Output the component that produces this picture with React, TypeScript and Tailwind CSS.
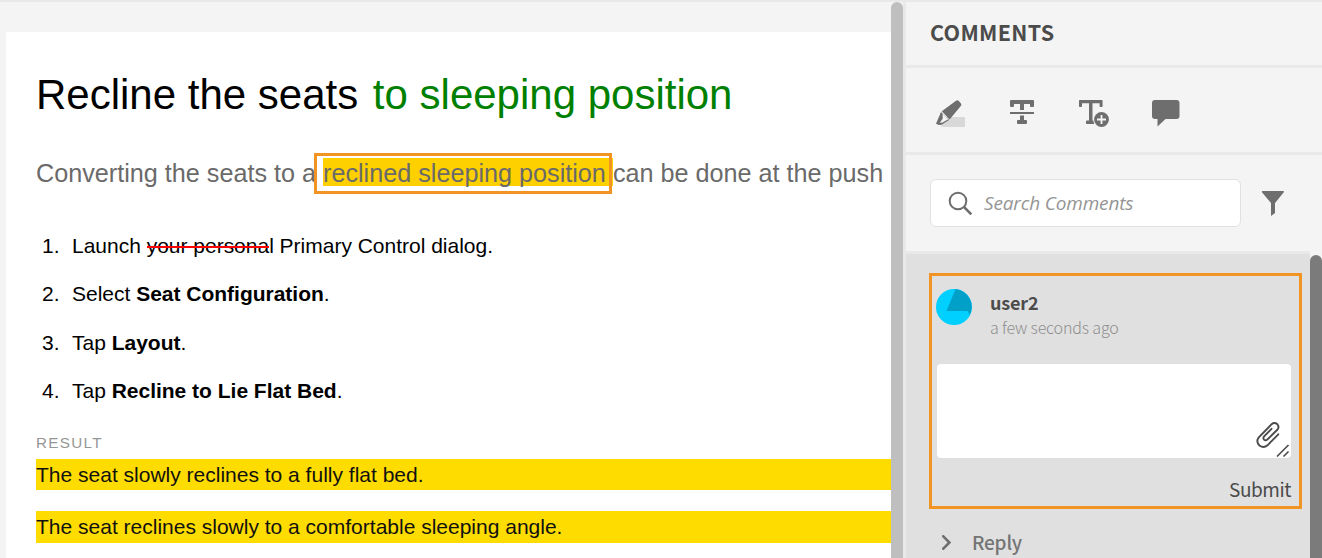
import type { ReactNode } from "react";

const uiFont = "font-['Noto_Sans_CJK_SC',sans-serif]";

function HighlightIcon() {
  return (
    <svg width="32" height="30" viewBox="0 0 32 30">
      <path d="M11 19h19v10H6z" fill="#d8d8d8" />
      <path d="M21 2.800q1.300-1.300 2.600 0l2.200 2.500q1 1.200.2 2.400L14.600 21.600 6.800 13.200z" fill="#6e6e6e" />
      <path d="M6 14L1 25.800q1.800 1.200 5.200 1.200L14 22" fill="#6e6e6e" />
      <path d="M7.600 15.600l5.600 5.700-5.600 3.200-2.900.3 3-4z" fill="#f4f4f4" />
    </svg>
  );
}

function StrikeIcon() {
  return (
    <svg width="24" height="24" viewBox="0 0 24 24" fill="#6e6e6e">
      <path d="M1 0h22q1 0 1 1v5q0 1-1 1h-2q-1 0-1-1V4h-6v6h-4V4H4v2q0 1-1 1H1q-1 0-1-1V1q0-1 1-1z" />
      <path d="M0 12h24v2H0zM10 15.500h4V20h2q1 0 1 1v2q0 1-1 1H8q-1 0-1-1v-2q0-1 1-1h2z" />
    </svg>
  );
}

function InsertIcon() {
  return (
    <svg width="31" height="27" viewBox="0 0 31 27">
      <path d="M.8 0h22q.8 0 .8.800v5.400q0 .8-.8.8h-1.400q-.8 0-.8-.8V3.300h-7.100V20.500h2.200V24H7.800q-.8 0-.8-.8v-1.900q0-.8.8-.8H10V3.300H3v2.900q0 .8-.8.8H.8Q0 7 0 6.200V.8Q0 0 .8 0z" fill="#6e6e6e" />
      <circle cx="22.500" cy="19.500" r="8.300" fill="#f4f4f4" />
      <circle cx="22.500" cy="19.500" r="7.400" fill="#6e6e6e" />
      <path d="M18 19.500h9M22.500 15v9" stroke="#f4f4f4" strokeWidth="1.800" />
    </svg>
  );
}

function BubbleIcon() {
  return (
    <svg width="28" height="27" viewBox="0 0 28 27" fill="#6e6e6e">
      <path d="M3 0h21.500q3 0 3 3v13q0 3-3 3H13.500l-8 7.500V19H3q-3 0-3-3V3q0-3 3-3z" />
    </svg>
  );
}

function PaperclipIcon() {
  return (
    <svg width="26" height="28" viewBox="0 0 26 28" fill="none" stroke="#4b4b4b" strokeWidth="1.900" strokeLinecap="round">
      <path d="M23.300 13.300l-10.800 11q-3.900 3.400-8 .2-4-4-.7-8.200L16.600 3.200q2.800-2.300 5.600-.1 2.600 2.900.1 5.700L12.400 18.500q-2 1.400-3.400.1-1.300-1.600.1-3.300l7.400-7.500" />
    </svg>
  );
}

function Step({ n, children }: { n: number; children: ReactNode }) {
  return (
    <li className="flex h-[48.400px] items-start text-[21px] leading-[24px] tracking-[-0.010px] text-[#000]">
      <span className="w-[30px] shrink-0">{n}.</span>
      <span className="whitespace-pre">{children}</span>
    </li>
  );
}

function Document() {
  return (
    <main className="h-full w-[891px] shrink-0 overflow-hidden bg-[#f4f4f4] pl-[6px] pt-[30px]">
      <article className="h-full bg-white pl-[30px] pt-[38px] font-['Liberation_Sans',Arial,sans-serif]">
        <h1 className="h-[50px] whitespace-pre text-[42px] leading-[50px] text-black">
          Recline the seats <span className="ml-[3px] text-[#008000]">to sleeping position</span>
        </h1>
        <p className="mt-[38px] h-[28px] whitespace-pre text-[25.200px] leading-[30px] text-[#6a6a6a]">
          Converting the seats to a{" "}
          <span className="relative inline-block h-[28px] bg-[#ffd000]">
            reclined sleeping position{" "}
            <span className="absolute -left-[9px] -top-[5px] h-[41px] w-[298px] border-3 border-[#f29423]" />
          </span>
          can be done at the push
        </p>
        <ol className="mt-[48px] pl-[6px]">
          <Step n={1}>
            Launch{" "}
            <span className="relative">
              your persona
              <span className="absolute left-0 top-[12px] h-[2px] w-full bg-[#ff0000]" />
            </span>
            l Primary Control dialog.
          </Step>
          <Step n={2}>Select <b>Seat Configuration</b>.</Step>
          <Step n={3}>Tap <b>Layout</b>.</Step>
          <Step n={4}>Tap <b>Recline to Lie Flat Bed</b>.</Step>
        </ol>
        <h2 className="mt-[5px] h-[20px] text-[15.200px] leading-[20px] tracking-[1.350px] text-[#969696]">RESULT</h2>
        <p className="mt-[6.500px] h-[31px] bg-[#ffdc00] text-[21px] leading-[32px] text-[#111]">
          The seat slowly reclines to a fully flat bed.
        </p>
        <p className="mt-[21px] h-[32px] bg-[#ffdc00] text-[21px] leading-[32px] text-[#111]">
          The seat reclines slowly to a comfortable sleeping angle.
        </p>
      </article>
    </main>
  );
}

function CommentCard() {
  return (
    <section className="ml-[23px] mt-[19px] h-[236px] w-[373px] border-3 border-[#f29423] pl-[4px] pt-[13px]">
      <div className="flex h-[75px]">
        <svg className="shrink-0" width="36" height="36" viewBox="0 0 36 36">
          <circle cx="18" cy="18" r="18" fill="#00d0ff" />
          <path d="M19.500.1L10.500 22H31q1.800.5 2.500 4.600A18 18 0 0 0 19.500.1z" fill="#00a0c8" />
        </svg>
        <div className="-mt-px ml-[18px] whitespace-nowrap">
          <div className="h-[28px] text-[18px] font-bold leading-[28px] tracking-[-0.200px] text-[#4b4b4b]">user2</div>
          <div className="h-[22px] text-[16px] font-light leading-[22px] tracking-[-0.150px] text-[#8e8e8e]">a few seconds ago</div>
        </div>
      </div>
      <div className="relative ml-[1px] h-[94px] w-[354px] rounded-[4px] bg-white">
        <div className="absolute left-[318px] top-[57px]"><PaperclipIcon /></div>
        <svg className="absolute bottom-0 right-[1px]" width="14" height="14" viewBox="0 0 14 14" stroke="#4b4b4b" strokeWidth="1.600">
          <path d="M1 12.500L12.500 1M7.500 12.500l5-5" />
        </svg>
      </div>
      <div className="mt-[15px] h-[32px] pr-[8px] text-right text-[19px] leading-[32px] tracking-[-0.450px] text-[#4b4b4b]">Submit</div>
    </section>
  );
}

function CommentsPanel() {
  return (
    <aside className={`flex h-full w-[416px] flex-col bg-[#f4f4f4] ${uiFont}`}>
      <h2 className="h-[66px] shrink-0 border-b-3 border-[#e9e9e9] pl-[24px] text-[21.500px] font-bold leading-[60px] tracking-[0.300px] text-[#4b4b4b]">
        COMMENTS
      </h2>
      <div className="flex h-[87px] shrink-0 items-start border-b-3 border-[#e9e9e9] pl-[29px] pt-[30px]">
        <span className="w-[75px]"><HighlightIcon /></span>
        <span className="w-[69px] pt-[2px]"><StrikeIcon /></span>
        <span className="w-[73px] pt-[2px]"><InsertIcon /></span>
        <span className="pt-[2px]"><BubbleIcon /></span>
      </div>
      <div className="flex h-[96px] shrink-0 items-start pl-[24px] pt-[24px]">
        <div className="flex h-[48px] w-[311px] items-center rounded-[6px] border border-[#e1e1e1] bg-white pl-[17px]">
          <svg width="25" height="25" viewBox="0 0 25 25" fill="none" stroke="#6e6e6e" strokeWidth="2">
            <circle cx="10" cy="10" r="8.300" />
            <path d="M16 16l7.300 7.300" strokeWidth="2.500" />
          </svg>
          <span className="ml-[11px] font-['Open_Sans',sans-serif] text-[19px] italic tracking-[-0.150px] text-[#959595]">Search Comments</span>
        </div>
        <svg className="ml-[20px] mt-[12px]" width="24" height="26" viewBox="0 0 24 26" fill="#6e6e6e">
          <path d="M1.500 0h20.700q1 .4.600 1.200L14 12v10L10 25V12L.9 1.200Q.6.3 1.500 0z" />
        </svg>
      </div>
      <div className="flex min-h-0 flex-1">
        <div className="w-[404px] border-t-3 border-[#e9e9e9] bg-[#e0e0e0]">
          <CommentCard />
          <div className="flex h-[40px] items-center pl-[36px] pt-[27px]">
            <svg width="9" height="15" viewBox="0 0 9 15" fill="none" stroke="#6e6e6e" strokeWidth="2.600" strokeLinecap="round">
              <path d="M1.300 1.300L7.400 7.500 1.300 13.700" />
            </svg>
            <span className="-mt-[2px] ml-[21px] text-[19px] font-medium leading-[28px] tracking-[-0.200px] text-[#747474]">Reply</span>
          </div>
        </div>
        <div className="w-[12px] pt-[4px]">
          <div className="h-full rounded-t-[6px] bg-[#7b7b7b]" />
        </div>
      </div>
    </aside>
  );
}

export default function App() {
  return (
    <div className="flex h-[558px] w-[1322px] overflow-hidden border-t-2 border-[#e9e9e9] bg-[#f4f4f4]">
      <Document />
      <div className="h-full w-[12px] shrink-0">
        <div className="h-full rounded-t-[6px] bg-[#bfbfbf]" />
      </div>
      <div className="h-full w-[3px] shrink-0 bg-[#e9e9e9]" />
      <CommentsPanel />
    </div>
  );
}
